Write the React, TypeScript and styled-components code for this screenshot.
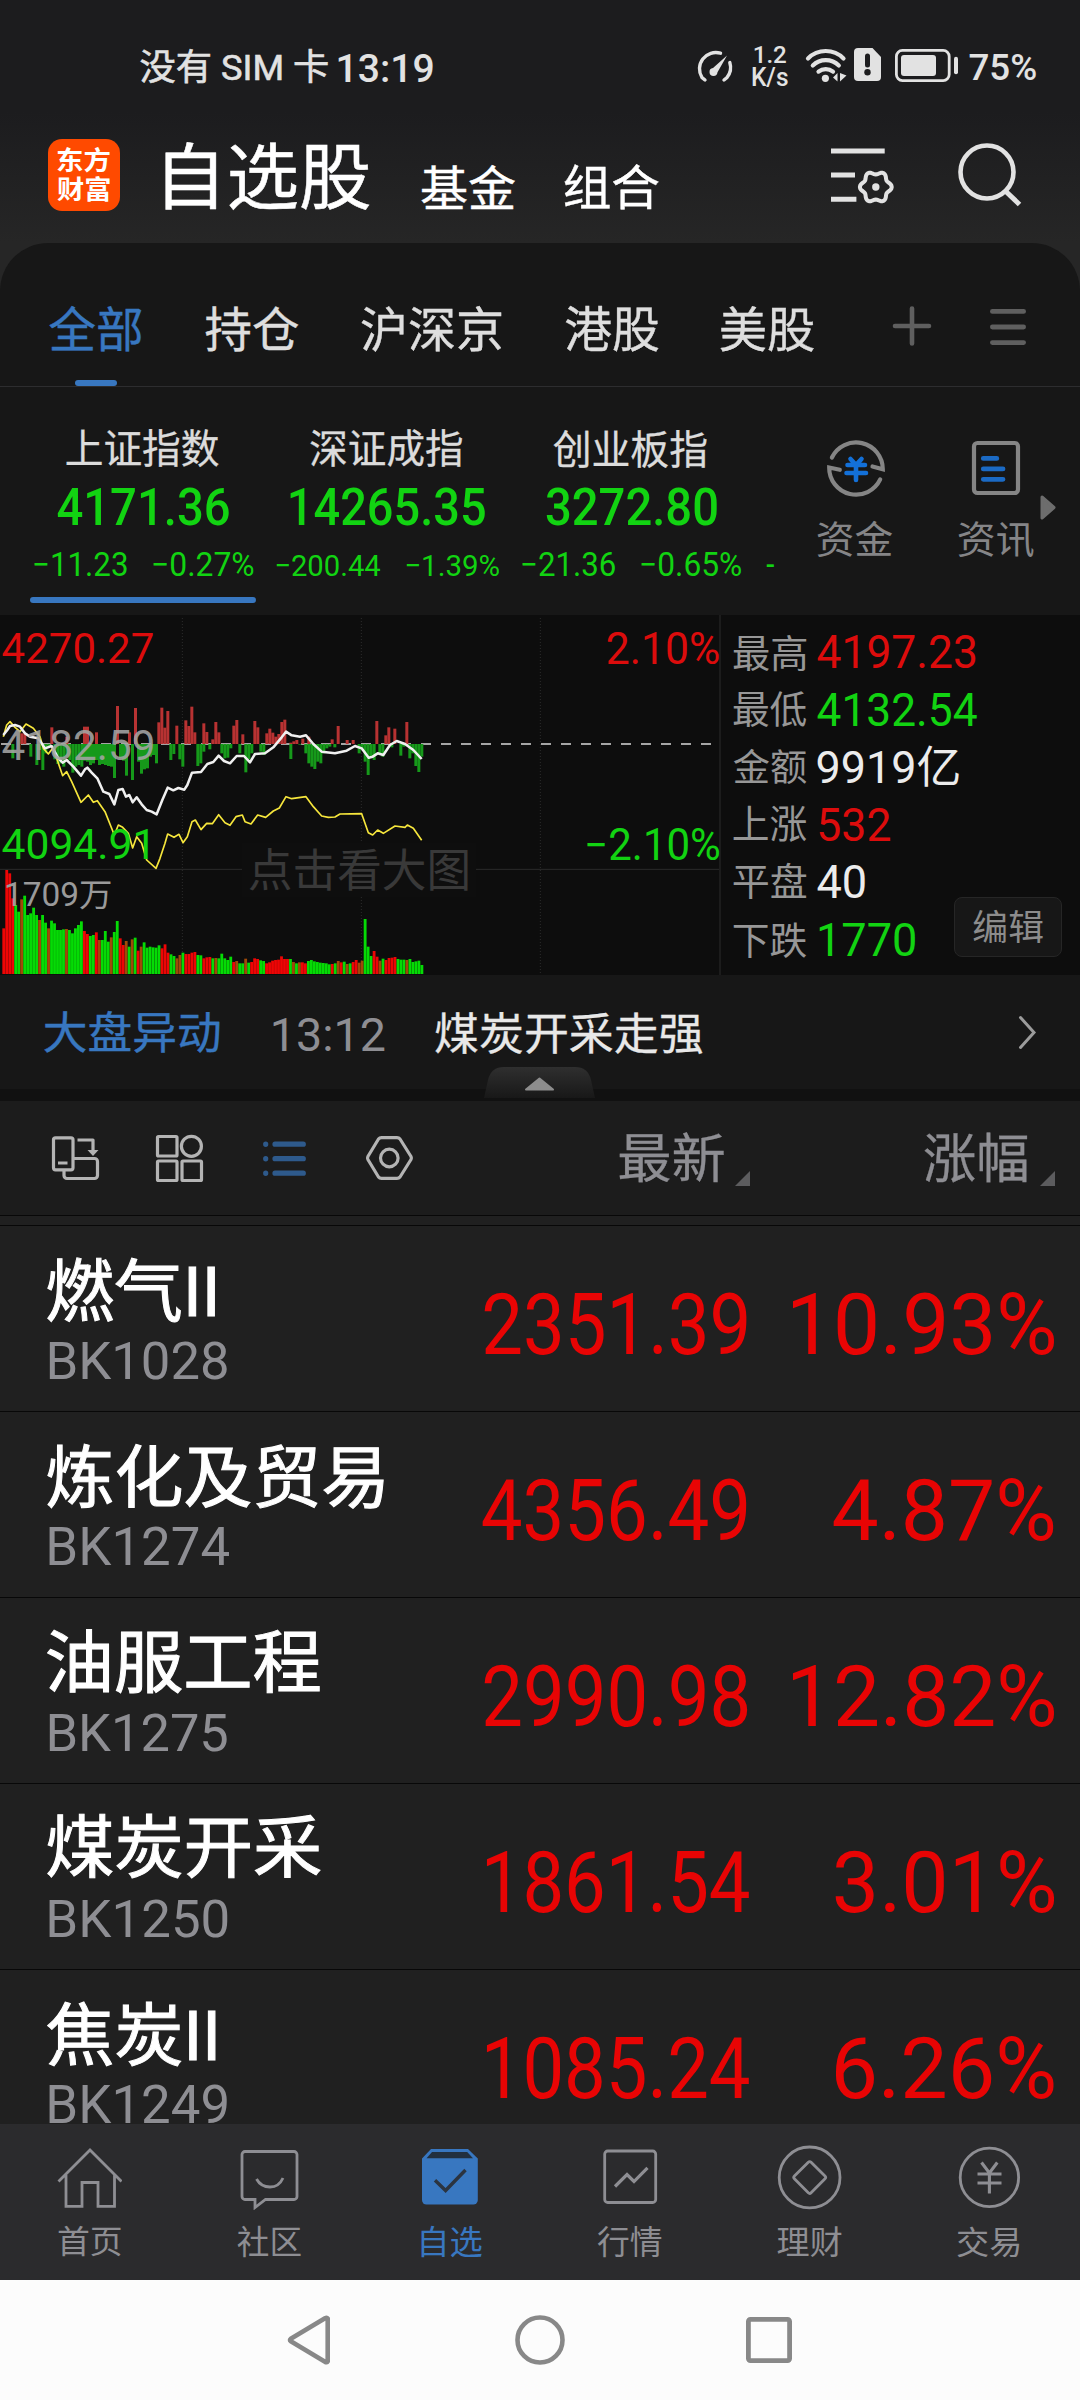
import React, { useMemo } from "react";
import styled, { createGlobalStyle, css } from "styled-components";

const FONT = 'Roboto, "Noto Sans CJK SC", sans-serif';
const BLUE = "#3877c0";
const RED = "#e80404";
const GREEN = "#12d312";
const GREY = "#8e8e93";
const LIGHT = "#e2e2e2";

const GlobalStyle = createGlobalStyle`
  html, body { margin: 0; padding: 0; background: #1c1c1e; }
  * { box-sizing: border-box; }
  body { font-family: ${FONT}; }
  svg { display: block; flex: none; }
`;

/* ---------- text whose drawn glyphs fill a given box ---------- */

type Space = { $mt?: number; $ml?: number; $mr?: number };
const space = css<Space>`
  margin-top: ${(p) => p.$mt ?? 0}px;
  margin-left: ${(p) => p.$ml ?? 0}px;
  margin-right: ${(p) => p.$mr ?? 0}px;
`;

const FitBox = styled.div<Space & { $w: number; $h: number; $color?: string; $weight: number; $stroke: number }>`
  flex: none;
  width: ${(p) => p.$w}px;
  height: ${(p) => p.$h}px;
  color: ${(p) => p.$color ?? "inherit"};
  font-weight: ${(p) => p.$weight};
  -webkit-text-stroke: ${(p) => p.$stroke}px currentColor;
  ${space}
`;
const FitGlyphs = styled.span`
  display: block;
  width: max-content;
  white-space: pre;
  line-height: 1;
  transform-origin: 0 0;
`;

const SAMPLE = 200;
let ctx: CanvasRenderingContext2D | null = null;

function measure(text: string, w: number, h: number, weight: number) {
  ctx = ctx ?? document.createElement("canvas").getContext("2d")!;
  ctx.font = `${weight} ${SAMPLE}px ${FONT}`;
  const m = ctx.measureText(text);
  const inkW = m.actualBoundingBoxLeft + m.actualBoundingBoxRight;
  const inkH = m.actualBoundingBoxAscent + m.actualBoundingBoxDescent;
  const size = (h / inkH) * SAMPLE;
  const k = size / SAMPLE;
  const sx = w / (inkW * k);
  const a = Math.round(m.fontBoundingBoxAscent * k);
  const d = Math.round(m.fontBoundingBoxDescent * k);
  const baseline = (size - (a + d)) / 2 + a;
  return {
    fontSize: `${size}px`,
    transform: `translate(${m.actualBoundingBoxLeft * k * sx - 0.4}px, ${m.actualBoundingBoxAscent * k - baseline + 0.7}px) scaleX(${sx})`,
  };
}

type FitProps = {
  text: string;
  w: number;
  h: number;
  weight?: number;
  stroke?: number;
  color?: string;
  mt?: number;
  ml?: number;
  mr?: number;
};
function Fit({ text, w, h, weight = 400, stroke = 0, color, mt, ml, mr }: FitProps) {
  const style = useMemo(() => measure(text, w, h, weight), [text, w, h, weight]);
  return (
    <FitBox $w={w} $h={h} $weight={weight} $stroke={stroke} $color={color} $mt={mt} $ml={ml} $mr={mr}>
      <FitGlyphs style={style}>{text}</FitGlyphs>
    </FitBox>
  );
}

const Svg = styled.svg<Space>`
  overflow: visible;
  ${space}
`;

/* ---------- page ---------- */

const Screen = styled.div`
  width: 1080px;
  height: 2400px;
  display: flex;
  flex-direction: column;
  overflow: hidden;
  background: #1c1c1e;
`;
const Top = styled.header`
  height: 291px;
  margin-bottom: -48px;
  flex: none;
  background: linear-gradient(#1c1c1e 0, #1c1c1e 112px, #262626 243px);
`;
const Line = styled.div<{ $h: number }>`
  display: flex;
  align-items: flex-start;
  height: ${(p) => p.$h}px;
`;
const Stack = styled.div<Space>`
  display: flex;
  flex-direction: column;
  align-items: flex-start;
  ${space}
`;
const Logo = styled.div`
  display: flex;
  flex-direction: column;
  align-items: center;
  gap: 5px;
  width: 72px;
  height: 72px;
  margin: 19px 0 0 48px;
  padding-top: 8px;
  border-radius: 14px;
  background: #ff4a00;
  color: #fff;
`;

function StatusBar() {
  return (
    <Line $h={120}>
      <Fit text="没有 SIM 卡" w={187} h={33.3} ml={141.2} mt={50} color={LIGHT} stroke={0.6} />
      <Fit text="13:19" w={94} h={29} ml={10.8} mt={52.7} color={LIGHT} weight={500} />
      <Svg width={37} height={33} viewBox="0 0 37 33" $ml={263} $mt={49} fill="none" stroke={LIGHT} strokeWidth={3.4}>
        <path d="M9 31 6 28.5A16.3 16.3 0 0 1 24.5 4.2M33.8 13.5A16.3 16.3 0 0 1 31 28.5L28 31" strokeLinecap="round" />
        <path d="M31 6.5 17 19a4 4 0 1 0 4.5 4.3z" fill={LIGHT} stroke="none" />
      </Svg>
      <Stack $ml={20} $mt={45}>
        <Fit text="1.2" w={31.4} h={17.7} ml={2} color={LIGHT} weight={500} />
        <Fit text="K/s" w={35} h={19.4} mt={4.6} color={LIGHT} weight={500} />
      </Stack>
      <Svg width={41} height={34} viewBox="0 0 41 34" $ml={17.8} $mt={47.5} fill="none" stroke={LIGHT} strokeWidth={4.2}>
        <path d="M2 10.4a25 25 0 0 1 35.5 0M6.8 17.4a18.5 18.5 0 0 1 26 0M12.5 23.6a11.5 11.5 0 0 1 14.5 0" strokeLinecap="round" />
        <circle cx="19.4" cy="30.3" r="3.6" fill={LIGHT} stroke="none" />
        <path d="M31.5 25v8.5l-4.5-4zM34 25v8.5l6.5-6z" fill={LIGHT} stroke="none" />
      </Svg>
      <Svg width={27} height={33} viewBox="0 0 27 33" $ml={7.5} $mt={48}>
        <path d="M4 0H18.5L27 9V29a4 4 0 0 1-4 4H4a4 4 0 0 1-4-4V4a4 4 0 0 1 4-4z" fill={LIGHT} />
        <path d="M13.5 8v9" stroke="#1c1c1e" strokeWidth="5" strokeLinecap="round" />
        <circle cx="13.5" cy="24.3" r="3.2" fill="#1c1c1e" />
      </Svg>
      <Svg width={64} height={33} viewBox="0 0 64 33" $ml={13.5} $mt={49}>
        <rect x="1.4" y="1.4" width="52.8" height="30.2" rx="6" fill="none" stroke={LIGHT} strokeWidth="2.8" />
        <rect x="6" y="6" width="35" height="21" rx="3" fill={LIGHT} />
        <rect x="59" y="7.7" width="4" height="17.6" rx="2" fill={LIGHT} />
      </Svg>
      <Fit text="75%" w={66.1} h={27.7} ml={10.8} mt={53.3} color={LIGHT} weight={500} />
    </Line>
  );
}

function gearPath(cx: number, cy: number) {
  const pts: string[] = [];
  for (let i = 0; i <= 72; i++) {
    const a = (i / 72) * Math.PI * 2;
    const r = 14.2 + 1.7 * Math.cos(6 * a);
    pts.push(`${(cx + r * Math.cos(a)).toFixed(2)} ${(cy + r * Math.sin(a)).toFixed(2)}`);
  }
  return `M${pts.join("L")}z`;
}

function TitleBar() {
  return (
    <Line $h={123}>
      <Logo>
        <Fit text="东方" w={52} h={25.3} weight={700} />
        <Fit text="财富" w={52} h={25} weight={700} />
      </Logo>
      <Fit text="自选股" w={203.5} h={67} ml={46} mt={22.3} color="#fff" stroke={0.5} />
      <Fit text="基金" w={93.3} h={43} ml={52} mt={46.3} color="#fff" stroke={0.4} />
      <Fit text="组合" w={94} h={44.3} ml={50.2} mt={45} color="#fff" stroke={0.4} />
      <Svg width={64} height={60} viewBox="0 0 64 60" $ml={172} $mt={28} fill="none" stroke={LIGHT}>
        <path d="M0 3h53.7M0 27h24M0 51.2h25.4" strokeWidth="5" />
        <path d={gearPath(44.8, 39)} strokeWidth="4" />
        <circle cx="44.8" cy="39" r="3.7" fill={LIGHT} stroke="none" />
      </Svg>
      <Svg width={64} height={64} viewBox="0 0 64 64" $ml={63} $mt={22} fill="none" stroke={LIGHT} strokeWidth="4.6">
        <circle cx="29" cy="30" r="26.5" />
        <path d="M46.6 48.2 61.5 62.5" strokeWidth="5" />
      </Svg>
    </Line>
  );
}

/* ---------- watch-list tabs ---------- */

const Panel = styled.section`
  display: flex;
  flex-direction: column;
  flex: none;
  height: 372px;
  background: #171717;
  border-radius: 48px 48px 0 0;
`;
const Tabs = styled.nav`
  display: flex;
  align-items: flex-start;
  height: 144px;
  border-bottom: 1px solid #2d2d2f;
  color: #dedede;
`;
const Underline = styled.div<Space & { $w: number }>`
  width: ${(p) => p.$w}px;
  height: 6px;
  border-radius: 3px;
  background: ${BLUE};
  ${space}
`;

function TabBar() {
  return (
    <Tabs>
      <Stack $ml={50} $mt={63}>
        <Fit text="全部" w={91.5} h={44.7} color={BLUE} stroke={0.4} />
        <Underline $w={42} $ml={25} $mt={29} />
      </Stack>
      <Fit text="持仓" w={92.6} h={44.7} ml={64} mt={62.5} stroke={0.4} />
      <Fit text="沪深京" w={139.7} h={45.5} ml={64.1} mt={62.5} stroke={0.4} />
      <Fit text="港股" w={92.7} h={45} ml={63.8} mt={63} stroke={0.4} />
      <Fit text="美股" w={93} h={45} ml={63} mt={62.7} stroke={0.4} />
      <Svg width={40} height={40} viewBox="0 0 40 40" $ml={77.5} $mt={63.4} stroke="#5f5f5f" strokeWidth="4.6" strokeLinecap="round">
        <path d="M3 20H37M20 2.5V37.5" />
      </Svg>
      <Svg width={36} height={38} viewBox="0 0 36 38" $ml={58} $mt={64.5} stroke="#5f5f5f" strokeWidth="4.8" strokeLinecap="round">
        <path d="M2.4 3.4H33.6M2.4 19H33.6M2.4 34.6H33.6" />
      </Svg>
    </Tabs>
  );
}

/* ---------- indices ---------- */

const Indices = styled.div`
  display: flex;
  align-items: flex-start;
  height: 228px;
  color: ${GREEN};
`;
const Shortcut = styled.div<Space & { $w: number }>`
  display: flex;
  flex-direction: column;
  align-items: center;
  width: ${(p) => p.$w}px;
  color: #858587;
  ${space}
`;

function IndexRow() {
  return (
    <Indices>
      <Stack $ml={30} $mt={43}>
        <Fit text="上证指数" w={152} h={36.7} ml={37} color="#dcdcdc" stroke={0.3} />
        <Fit text="4171.36" w={171.2} h={37.4} ml={27.8} mt={21.6} weight={500} />
        <Line $h={45.7}>
          <Fit text="−11.23" w={92} h={24.3} ml={5} mt={25.6} />
          <Fit text="−0.27%" w={99.8} h={24.3} ml={26.6} mt={25.6} />
        </Line>
        <Underline $w={226} $mt={25.4} />
      </Stack>
      <Stack $ml={20.5} $mt={43}>
        <Fit text="深证成指" w={151.4} h={36.7} ml={34.1} color="#dcdcdc" stroke={0.3} />
        <Fit text="14265.35" w={194.2} h={37.4} ml={14.5} mt={21.6} weight={500} />
        <Line $h={50}>
          <Fit text="−200.44" w={103.5} h={22} mt={28} />
          <Fit text="−1.39%" w={92.3} h={22} ml={26.7} mt={28} />
        </Line>
      </Stack>
      <Stack $ml={23.7} $mt={43}>
        <Fit text="创业板指" w={152.9} h={36.7} ml={31.8} color="#dcdcdc" stroke={0.3} />
        <Fit text="3272.80" w={170.1} h={37.4} ml={24.2} mt={21.6} weight={500} />
        <Line $h={50}>
          <Fit text="−21.36" w={92.3} h={24.3} mt={25.6} />
          <Fit text="−0.65%" w={99.4} h={24.3} ml={27} mt={25.6} />
          <Fit text="-" w={7.2} h={2.6} ml={25.6} mt={38} />
        </Line>
      </Stack>
      <Shortcut $w={76} $ml={43.6} $mt={52}>
        <Svg width={58} height={58} viewBox="0 0 58 58" fill="none" stroke="#858585" strokeWidth="4.2">
          <path d="M4.9 18.5A26.8 26.8 0 0 1 55.8 30.2L45.5 27.5M53.2 40.4A26.8 26.8 0 0 1 2.2 28.5L12.8 30.8" strokeLinecap="round" />
          <g stroke="#1370d8" strokeWidth="4.6" strokeLinecap="round">
            <path d="M23.5 20l5.5 6 5.5-6M20.5 26h17.5M19.5 34h19.5M29 27v14" />
          </g>
        </Svg>
        <Fit text="资金" w={74.7} h={35.7} mt={23.3} />
      </Shortcut>
      <Shortcut $w={76} $ml={64.6} $mt={54}>
        <Svg width={48} height={54} viewBox="0 0 48 54" fill="none">
          <rect x="2" y="2" width="44" height="50" rx="3.5" stroke="#858585" strokeWidth="4.2" />
          <path d="M11.3 17.4h13.5M11.3 27.9H31M11.3 38.3H31" stroke="#1b6ac4" strokeWidth="4.8" strokeLinecap="round" />
        </Svg>
        <Fit text="资讯" w={75} h={35.7} mt={25.3} />
      </Shortcut>
      <Svg width={16} height={25} viewBox="0 0 16 25" $ml={5.4} $mt={107.6}>
        <path d="M2 2 14 12.5 2 23z" fill="#6d6d6d" stroke="#6d6d6d" strokeWidth="3" strokeLinejoin="round" />
      </Svg>
    </Indices>
  );
}

/* ---------- intraday chart ---------- */

const Quote = styled.section`
  display: flex;
  flex: none;
  height: 360px;
  background: #0d0d0d;
`;
const ChartBox = styled.div`
  position: relative;
  width: 721px;
  border-right: 2px solid #1c1c1c;
`;
const Over = styled.div<{ $x: number; $y: number }>`
  position: absolute;
  left: ${(p) => p.$x}px;
  top: ${(p) => p.$y}px;
`;
const Hint = styled.div`
  position: absolute;
  left: 242px;
  top: 228px;
  width: 234px;
  height: 54px;
  padding: 5px 0 0 8px;
  background: #0e0e0e;
`;

/* bars around the previous close: x and far end */
const UP = "61,370 70,370 151,352 196,380 249,350 258,350 285,367 348,288 384,367 402,294 472,337 481,293 490,353 499,303 526,347 553,331 562,348 571,290 580,367 607,340 616,366 634,388 643,336 652,367 697,347 706,330 724,373 760,333 769,352 796,370 805,356 814,368 823,380 832,372 841,336 850,329 868,398 877,394 886,390 904,386 922,380 992,388 1010,348 1037,390 1055,390 1126,333 1153,376 1162,352 1180,356 1216,336";
const DOWN = "34,445 88,440 106,465 115,420 124,480 133,430 142,408 160,448 169,462 178,460 187,470 196,440 205,450 214,488 223,470 232,465 241,470 249,452 258,455 267,465 276,460 285,450 294,465 303,462 312,465 321,468 330,470 339,504 357,445 366,452 375,497 393,510 411,455 420,491 429,478 438,475 447,440 456,435 465,460 508,450 517,432 535,448 544,470 589,468 598,460 607,425 625,418 661,430 670,445 679,443 688,415 715,430 733,487 742,448 751,430 778,425 787,435 868,447 895,404 913,430 922,460 931,470 940,477 949,455 958,460 967,430 976,415 985,410 1000,412 1073,430 1082,415 1091,455 1100,495 1109,440 1118,450 1135,435 1144,440 1171,412 1198,437 1207,410 1225,445 1234,430 1243,468 1252,486 1261,440";

const PRICE = "10,375 22,360 30,348 45,345 60,350 75,370 90,380 115,385 135,415 155,408 175,445 188,458 200,450 220,470 243,497 255,478 262,473 275,488 292,505 310,545 328,552 343,583 355,540 368,537 378,560 388,555 398,577 410,562 425,583 440,600 455,605 470,613 487,570 503,533 520,541 535,534 553,539 562,525 576,488 603,486 622,462 640,456 656,437 672,453 690,460 710,438 732,438 750,457 765,432 795,430 820,412 845,382 858,365 875,376 900,380 918,376 940,402 965,425 1005,430 1040,422 1065,408 1085,415 1106,443 1118,440 1133,430 1150,435 1170,405 1190,393 1215,402 1240,420 1265,447";
const AVERAGE = "10,380 20,345 30,335 45,352 60,365 78,342 100,355 120,380 130,415 145,432 158,415 170,445 188,497 200,485 215,515 243,577 265,555 280,577 292,572 315,605 343,675 355,645 368,652 385,670 398,714 410,680 425,700 440,750 468,775 480,745 495,700 503,672 522,682 537,673 549,698 562,680 576,635 586,630 603,659 620,640 637,641 656,614 675,638 690,646 708,620 727,615 735,635 753,642 773,615 797,622 820,603 838,594 858,560 875,566 918,560 940,590 965,618 985,622 1005,621 1020,612 1085,611 1105,668 1118,675 1133,660 1150,670 1185,648 1215,652 1222,645 1240,655 1265,691";

const VOLUME = [
  955, 780, 790, 865, 885, 905, 868, 857, 915, 910, 893, 915, 930, 915, 938, 955, 932, 940, 960, 960, 958, 957, 960, 970,
  955, 945, 934, 963, 972, 978, 975, 967, 990, 990, 963, 995, 982, 966, 933, 985, 1005, 993, 1010, 988, 983, 1022, 1010,
  997, 1013, 1010, 1012, 1013, 1006, 1015, 1003, 1028, 1033, 1038, 1045, 1035, 1028, 1032, 1032, 1028, 1026, 1035, 1036,
  1045, 1042, 1041, 1045, 1044, 1045, 1031, 1045, 1050, 1040, 1056, 1053, 1060, 1060, 1046, 1058, 1056, 1045, 1047, 1051,
  1053, 1060, 1057, 1052, 1050, 1049, 1039, 1047, 1047, 1047, 1056, 1060, 1057, 1057, 1060, 1053, 1050, 1054, 1056, 1058,
  1059, 1060, 1063, 1062, 1060, 1053, 1057, 1055, 1062, 1060, 1056, 1050, 1058, 1052, 927, 1010, 1038, 1023, 1040, 1052,
  1046, 1050, 1044, 1043, 1041, 1047, 1049, 1049, 1050, 1047, 1056, 1054, 1052, 1065,
];
const VOLUME_SIDE =
  "rrrrggmgggggmgg" + "mgggggmggggg" + "rrggrmgggmgg" + "rrmgmg" + "rmgggggg" + "rrrggmmg" + "rrrrggrrrg" + "mggggg" + "rmggmgr" +
  "rrggrrrrrrrr" + "gmgmrr" + "gggggggg" + "rgmrgmgrrmm" + "ggg" + "rrmgrrrr" + "gggmgggggg";
const SIDE_FILL: Record<string, string> = { r: "#ee0505", g: "#05db05", m: "#a04a08" };

function bars(list: string) {
  return list.split(" ").map((p) => p.split(",").map(Number));
}

function Chart() {
  return (
    <ChartBox>
      <svg width={719} height={360} viewBox="0 15 2157 1080" fill="none">
        <path d="M547 24V1092M1084 24V1092M1621 24V1092" stroke="#2c2c2c" strokeWidth="3" strokeDasharray="3 6" />
        <path d="M0 778H2157" stroke="#2b2b2b" strokeWidth="3" />
        <path d="M3 402H2157" stroke="#a5a5a5" strokeWidth="5.4" strokeDasharray="30 30" />
        {bars(UP).map(([x, y]) => (
          <rect key={x} x={x} y={y} width={9} height={402 - y} fill="#b83232" />
        ))}
        {bars(DOWN).map(([x, y]) => (
          <rect key={x} x={x} y={402} width={9} height={y - 402} fill="#16991a" />
        ))}
        {VOLUME.map((y, i) => (
          <rect key={i} x={7 + i * 8.96} y={y} width={8.5} height={1092 - y} fill={i < 121 || i > 123 ? SIDE_FILL[VOLUME_SIDE[i] ?? "g"] : SIDE_FILL.g} />
        ))}
        <polyline points={AVERAGE} stroke="#f6e63c" strokeWidth="5" strokeLinejoin="round" />
        <polyline points={PRICE} stroke="#f0f0f0" strokeWidth="7.6" strokeLinejoin="round" />
      </svg>
      <Hint>
        <Fit text="点击看大图" w={218} h={42} color="#393939" />
      </Hint>
      <Over $x={2.7} $y={17.3}>
        <Fit text="4270.27" w={150} h={31} color="#dc0c0c" />
      </Over>
      <Over $x={2.7} $y={114.3}>
        <Fit text="4182.59" w={150.3} h={31.4} color="rgba(165,165,165,0.88)" />
      </Over>
      <Over $x={2.7} $y={213.3}>
        <Fit text="4094.91" w={145.3} h={31} color={GREEN} />
      </Over>
      <Over $x={7} $y={266}>
        <Fit text="1709万" w={104} h={27.5} color="#9a9a9a" />
      </Over>
      <Over $x={607.9} $y={17}>
        <Fit text="2.10%" w={111} h={32} color="#dc0c0c" />
      </Over>
      <Over $x={587.5} $y={213}>
        <Fit text="−2.10%" w={131.5} h={32} color={GREEN} />
      </Over>
    </ChartBox>
  );
}

const Stats = styled.div`
  position: relative;
  flex: 1;
  padding: 19px 0 0 12.9px;
`;
const Stat = styled.div`
  display: flex;
  align-items: flex-start;
  height: 57.35px;
`;
const EditButton = styled.div`
  position: absolute;
  right: 18px;
  bottom: 18px;
  display: flex;
  align-items: center;
  justify-content: center;
  width: 108px;
  height: 60px;
  padding-bottom: 1px;
  border: 1.5px solid #262626;
  border-radius: 8px;
  background: #171717;
  color: #8c8c8c;
`;

const STATS = [
  { label: "最高", value: "4197.23", w: 157.6, h: 33.6, dx: 0, dy: 0.7, color: "#dc0c0c" },
  { label: "最低", value: "4132.54", w: 159, h: 33.6, dx: 0, dy: 1.4, color: GREEN },
  { label: "金额", value: "9919亿", w: 141, h: 40.7, dx: 0, dy: -3.4, color: "#ececec" },
  { label: "上涨", value: "532", w: 70.3, h: 33.6, dx: 1.7, dy: 2, color: "#dc0c0c" },
  { label: "平盘", value: "40", w: 47.3, h: 33.6, dx: 0, dy: 1.4, color: "#ececec" },
  { label: "下跌", value: "1770", w: 95.5, h: 33.6, dx: 2.5, dy: 2, color: GREEN },
];

function StatPanel() {
  return (
    <Stats>
      {STATS.map((s) => (
        <Stat key={s.label}>
          <Fit text={s.label} w={72.6} h={35.4} color="#979797" />
          <Fit text={s.value} w={s.w} h={s.h} ml={11.5 + s.dx} mt={s.dy} color={s.color} />
        </Stat>
      ))}
      <EditButton>
        <Fit text="编辑" w={68.9} h={33.3} />
      </EditButton>
    </Stats>
  );
}

/* ---------- market news line ---------- */

const News = styled.section`
  position: relative;
  display: flex;
  align-items: flex-start;
  flex: none;
  height: 126px;
  background: linear-gradient(#171717 0 114px, #111 114px);
`;
const Handle = styled.svg`
  position: absolute;
  left: 484px;
  bottom: 3px;
`;

function NewsLine() {
  return (
    <News>
      <Fit text="大盘异动" w={174.6} h={41.4} ml={44.8} mt={37.3} color={BLUE} stroke={0.4} />
      <Fit text="13:12" w={110.6} h={34} ml={54.6} mt={42} color={GREY} />
      <Fit text="煤炭开采走强" w={266.5} h={41.7} ml={51.4} mt={37.3} color="#e8e8e8" stroke={0.3} />
      <Svg width={17} height={33} viewBox="0 0 17 33" $ml={316.8} $mt={40.8} fill="none" stroke="#9b9b9b" strokeWidth="3">
        <path d="M1.5 1.5 15 16.5 1.5 31.5" strokeLinecap="round" />
      </Svg>
      <Handle width={111} height={31} viewBox="0 0 111 31">
        <defs>
          <linearGradient id="handle" x1="0" y1="0" x2="0" y2="1">
            <stop offset="0" stopColor="#2f2f2f" />
            <stop offset="1" stopColor="#181818" />
          </linearGradient>
        </defs>
        <path d="M0 31 4 13Q7 0 20 0H91Q104 0 107 13L111 31z" fill="url(#handle)" />
        <path d="M42 22.5 55.5 11.5 69 22.5z" fill="#8d8d8d" stroke="#8d8d8d" strokeWidth="2" strokeLinejoin="round" />
      </Handle>
    </News>
  );
}

/* ---------- table ---------- */

const TableHead = styled.div`
  display: flex;
  align-items: flex-start;
  flex: none;
  height: 115px;
  background: #1c1c1c;
  border-bottom: 1px solid #080808;
  color: ${GREY};
`;
const List = styled.main`
  flex: 1;
  min-height: 0;
  overflow: hidden;
  background: #202020;
`;
const ListRow = styled.div`
  display: grid;
  grid-template-columns: 1fr 330px 304px;
  height: 186px;
  padding: 31px 26px 0 47.5px;
  border-bottom: 1px solid #080808;
`;
const Spacer = styled.div`
  height: 10px;
  border-bottom: 1px solid #080808;
`;
const Cell = styled.div`
  display: flex;
  justify-content: flex-end;
`;

function SortMark({ ml }: { ml: number }) {
  return (
    <Svg width={15} height={15} viewBox="0 0 15 15" $ml={ml} $mt={70}>
      <path d="M15 0V15H0z" fill="#5c5c5e" />
    </Svg>
  );
}

function TableHeader() {
  return (
    <TableHead>
      <Svg width={47} height={44} viewBox="0 0 47 44" $ml={52} $mt={35} fill="none" stroke="#b4b4b4" strokeWidth="3.2" strokeLinejoin="round">
        <rect x="1.5" y="1.8" width="19.5" height="32" rx="2" />
        <path d="M6 27H15.5M21 22.5H42.5a3 3 0 0 1 3 3V39.5a3 3 0 0 1-3 3H15a3 3 0 0 1-3-3V34M25.5 4H41V15" />
        <path d="M35.5 14H46.5L41 20z" fill="#b4b4b4" stroke="none" />
      </Svg>
      <Svg width={47} height={47} viewBox="0 0 47 47" $ml={57.3} $mt={33.5} fill="none" stroke="#b4b4b4" strokeWidth="3.2">
        <rect x="1.5" y="1.5" width="19.5" height="19.5" rx="1" />
        <circle cx="35.4" cy="11.3" r="10" />
        <rect x="1.5" y="26" width="19.5" height="19.5" rx="1" />
        <rect x="26" y="26" width="19.5" height="19.5" rx="1" />
      </Svg>
      <Svg width={43} height={36} viewBox="0 0 43 36" $ml={60} $mt={39.5} stroke="#2e5a8c" strokeWidth="5.2" strokeLinecap="round">
        <path d="M12 3.2H40.3M12 17.7H40.3M12 32.2H40.3M2.7 3.1v.2M2.7 17.6v.2M2.7 32.1v.2" />
      </Svg>
      <Svg width={47} height={44} viewBox="0 0 47 44" $ml={60.2} $mt={35} fill="none" stroke="#b4b4b4" strokeWidth="3.2" strokeLinejoin="round">
        <path d="M12.5 3Q13.6 1.6 15.5 1.6H31Q32.9 1.6 34 3L45 20.5Q45.7 22 45 23.5L34 41Q32.9 42.4 31 42.4H15.5Q13.6 42.4 12.5 41L1.9 23.5Q1.2 22 1.9 20.5z" />
        <circle cx="23.3" cy="22" r="8.8" />
      </Svg>
      <Fit text="最新" w={104} h={50.3} ml={206.9} mt={31} stroke={0.3} />
      <SortMark ml={10.8} />
      <Fit text="涨幅" w={102.6} h={49.7} ml={175} mt={31.3} stroke={0.3} />
      <SortMark ml={12.4} />
    </TableHead>
  );
}

const ROWS = [
  { name: "燃气II", nw: 167, nh: 63.7, dx: 0.7, code: "BK1028", cw: 177.3, price: "2351.39", pw: 262.2, end: 3, pct: "10.93%", qw: 261.5 },
  { name: "炼化及贸易", nw: 335.8, nh: 64, dx: 0, code: "BK1274", cw: 179.4, price: "4356.49", pw: 263.9, end: 3, pct: "4.87%", qw: 219.6 },
  { name: "油服工程", nw: 271.8, nh: 63.5, dx: 0.7, code: "BK1275", cw: 177.3, price: "2990.98", pw: 262.7, end: 2.8, pct: "12.82%", qw: 261.5 },
  { name: "煤炭开采", nw: 272.5, nh: 63.5, dx: 0, code: "BK1250", cw: 178, price: "1861.54", pw: 262.4, end: 0.3, pct: "3.01%", qw: 218.5 },
  { name: "焦炭II", nw: 167.5, nh: 64, dx: 0, code: "BK1249", cw: 177.3, price: "1085.24", pw: 262.4, end: 0.3, pct: "6.26%", qw: 218 },
];

function StockList() {
  return (
    <List>
      <Spacer />
      {ROWS.map((r) => (
        <ListRow key={r.code}>
          <Stack>
            <Fit text={r.name} w={r.nw} h={r.nh} ml={r.dx} color="#fff" stroke={1} />
            <Fit text={r.code} w={r.cw} h={38.7} ml={2.8} mt={83.2 - r.nh} color={GREY} />
          </Stack>
          <Cell>
            <Fit text={r.price} w={r.pw} h={62} mt={35.8} mr={r.end} color={RED} />
          </Cell>
          <Cell>
            <Fit text={r.pct} w={r.qw} h={62} mt={35.8} color={RED} />
          </Cell>
        </ListRow>
      ))}
    </List>
  );
}

/* ---------- bottom navigation ---------- */

const BottomNav = styled.nav`
  display: grid;
  grid-template-columns: repeat(6, 180px);
  flex: none;
  height: 156px;
  background: #2b2b2d;
`;
const NavItem = styled.div<{ $active?: boolean }>`
  display: flex;
  flex-direction: column;
  align-items: center;
  padding: 21px 1.6px 0 0;
  color: ${(p) => (p.$active ? BLUE : GREY)};
`;

const NAV = [
  {
    label: "首页", w: 62, h: 30, ml: 1.4,
    icon: <path d="M1.5 36.5 33 5 64.5 36.5M9 30V61.3H25V37.5H41V61.3H57.5V30" />,
  },
  {
    label: "社区", w: 63, h: 30.4, ml: 1.2,
    icon: (
      <>
        <path d="M8 6.5H57a3 3 0 0 1 3 3V51.5a3 3 0 0 1-3 3H28.5L18 62.5V54.5H8a3 3 0 0 1-3-3V9.5a3 3 0 0 1 3-3z" />
        <path d="M19.5 34Q24 42 33 42T46 33" />
      </>
    ),
  },
  {
    label: "自选", w: 60.3, h: 30.6, ml: 4.9,
    icon: (
      <>
        <path d="M14 4H51L60.8 13.5V55a4.5 4.5 0 0 1-4.5 4.5H9.5A4.5 4.5 0 0 1 5 55V13.5z" fill={BLUE} stroke="none" />
        <path d="M15 7H50.2L56 13.2H9.5z" fill="#22303f" stroke="none" />
        <path d="M18 35.2 28.6 45.5 48.5 25" stroke="#2b3440" strokeWidth="3.4" />
      </>
    ),
  },
  {
    label: "行情", w: 63.7, h: 30.4, ml: 1.2,
    icon: (
      <>
        <rect x="7.7" y="6" width="51" height="51.5" rx="3" />
        <path d="M18 41.5 30 29.5 37 36.5 50.5 22.8" strokeWidth="3.2" />
      </>
    ),
  },
  {
    label: "理财", w: 63.7, h: 30.4, ml: 2,
    icon: (
      <>
        <circle cx="32.6" cy="32.4" r="30.4" />
        <path d="M31.3 17.3a2 2 0 0 1 2.8 0L48 31a2 2 0 0 1 0 2.8L34.1 47.8a2 2 0 0 1-2.8 0L17.4 33.8a2 2 0 0 1 0-2.8z" />
      </>
    ),
  },
  {
    label: "交易", w: 61.6, h: 30.4, ml: 0,
    icon: (
      <>
        <circle cx="32.4" cy="32.4" r="29.2" />
        <path d="M24.5 17.5 32.4 28 40.3 17.5M20.5 29H44.5M20.5 38H44.5M32.4 28V48.5" strokeWidth="3.1" />
      </>
    ),
  },
];

function NavBar() {
  return (
    <BottomNav>
      {NAV.map((n) => (
        <NavItem key={n.label} $active={n.label === "自选"}>
          <svg width={65} height={65} viewBox="0 0 65 65" fill="none" stroke="currentColor" strokeWidth="2.8">
            {n.icon}
          </svg>
          <Fit text={n.label} w={n.w} h={n.h} mt={15.5} ml={n.ml} />
        </NavItem>
      ))}
    </BottomNav>
  );
}

const SystemNav = styled.footer`
  display: flex;
  flex: none;
  align-items: flex-start;
  height: 120px;
  background: #fcfcfc;
`;

function SystemBar() {
  return (
    <SystemNav>
      <Svg width={44} height={50} viewBox="0 0 44 50" $ml={286.5} $mt={35} fill="none" stroke="#888" strokeWidth="4.6" strokeLinejoin="round">
        <path d="M40.7 3.6V46.4Q39.8 48 38 46.8L3.8 26.3Q2.2 25 3.8 23.7L38 3.2Q39.8 2.2 40.7 3.6z" />
      </Svg>
      <Svg width={50} height={50} viewBox="0 0 50 50" $ml={184.5} $mt={35} fill="none" stroke="#888" strokeWidth="4.6">
        <circle cx="25" cy="25" r="22.5" />
      </Svg>
      <Svg width={46} height={46} viewBox="0 0 46 46" $ml={181} $mt={37} fill="none" stroke="#888" strokeWidth="4.8">
        <rect x="2.4" y="2.4" width="41.2" height="41.2" rx="2" />
      </Svg>
    </SystemNav>
  );
}

export default function App() {
  return (
    <Screen>
      <GlobalStyle />
      <Top>
        <StatusBar />
        <TitleBar />
      </Top>
      <Panel>
        <TabBar />
        <IndexRow />
      </Panel>
      <Quote>
        <Chart />
        <StatPanel />
      </Quote>
      <NewsLine />
      <TableHeader />
      <StockList />
      <NavBar />
      <SystemBar />
    </Screen>
  );
}
